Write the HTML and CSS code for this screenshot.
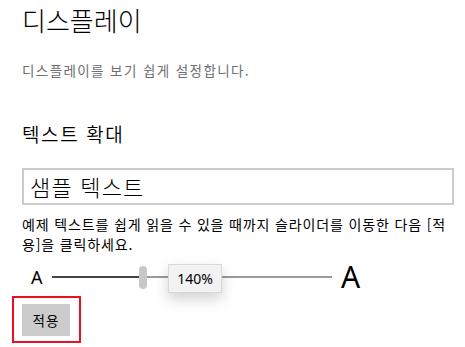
FILE: index.html
```html
<!DOCTYPE html>
<html lang="ko">
<head>
<meta charset="utf-8">
<title>디스플레이</title>
<link rel="stylesheet" href="styles.css">
</head>
<body>
<main class="page">
  <h1 class="title">디스플레이</h1>
  <p class="subtitle">디스플레이를 보기 쉽게 설정합니다.</p>
  <h2 class="section">텍스트 확대</h2>
  <div class="sample">샘플 텍스트</div>
  <p class="desc">예제 텍스트를 쉽게 읽을 수 있을 때까지 슬라이더를 이동한 다음 [적용]을 클릭하세요.</p>
  <div class="slider-row">
    <span class="a-small">A</span>
    <div class="track">
      <span class="fill"></span>
      <span class="thumb"></span>
      <span class="rest"></span>
      <span class="tip">140%</span>
    </div>
    <span class="a-big">A</span>
  </div>
  <div class="focus">
    <button class="apply" type="button">적용</button>
  </div>
</main>
</body>
</html>
```

FILE: styles.css
```css
html, body {
  margin: 0;
  padding: 0;
  background: #ffffff;
}

body {
  font-family: "Noto Sans CJK KR", "Noto Sans", sans-serif;
  color: #000000;
}

.page {
  padding: 0 11px 0 22px;
  width: 432px;
}

.title {
  margin: 0;
  font-size: 26px;
  font-weight: 300;
  line-height: 40px;
  height: 40px;
  color: #000000;
}

.subtitle {
  margin: 20px 0 0;
  font-size: 13.5px;
  line-height: 20px;
  color: #6e6e6e;
  letter-spacing: 1.4px;
}

.section {
  margin: 40px 0 0;
  font-size: 19px;
  font-weight: 350;
  line-height: 28px;
  letter-spacing: 1.6px;
}

.sample {
  margin-top: 20px;
  height: 33px;
  border: 2px solid #cccccc;
  padding-left: 6px;
  font-size: 22px;
  font-weight: 300;
  line-height: 33px;
  letter-spacing: 1.2px;
}

.desc {
  margin: 9px 0 0;
  font-size: 14px;
  line-height: 20px;
  letter-spacing: 0.85px;
}

.slider-row {
  margin-top: 8px;
  height: 30px;
  display: flex;
  align-items: center;
}

.a-small {
  font-family: "Noto Sans", sans-serif;
  font-size: 18px;
  margin-left: 9px;
  width: 12px;
}

.track {
  position: relative;
  margin-left: 9px;
  width: 280px;
  height: 30px;
  display: flex;
  align-items: center;
}

.fill {
  width: 87px;
  height: 2px;
  background: #444444;
}

.thumb {
  width: 8px;
  height: 23px;
  border-radius: 4px;
  background: #c8c8c8;
}

.rest {
  flex: 1;
  height: 2px;
  background: #9a9a9a;
}

.tip {
  position: absolute;
  left: 116px;
  top: 2px;
  width: 52px;
  height: 27px;
  border: 1px solid #d8d8d8;
  background: #f2f2f2;
  box-shadow: 0 6px 14px rgba(0, 0, 0, 0.18);
  font-family: "Noto Sans", sans-serif;
  font-size: 14px;
  line-height: 27px;
  text-align: center;
}

.a-big {
  font-family: "Noto Sans", sans-serif;
  font-size: 30px;
  margin-left: 9px;
  line-height: 30px;
}

.focus {
  margin: 4px 0 0 -10px;
  width: 52px;
  height: 32px;
  border: 2px solid #e81123;
  padding: 6px 5px 5px 8px;
}

.apply {
  width: 48px;
  height: 32px;
  border: none;
  margin: 0;
  padding: 0;
  background: #cccccc;
  font-family: "Noto Sans CJK KR", sans-serif;
  font-size: 13.5px;
  letter-spacing: 1px;
  color: #000000;
}
```
